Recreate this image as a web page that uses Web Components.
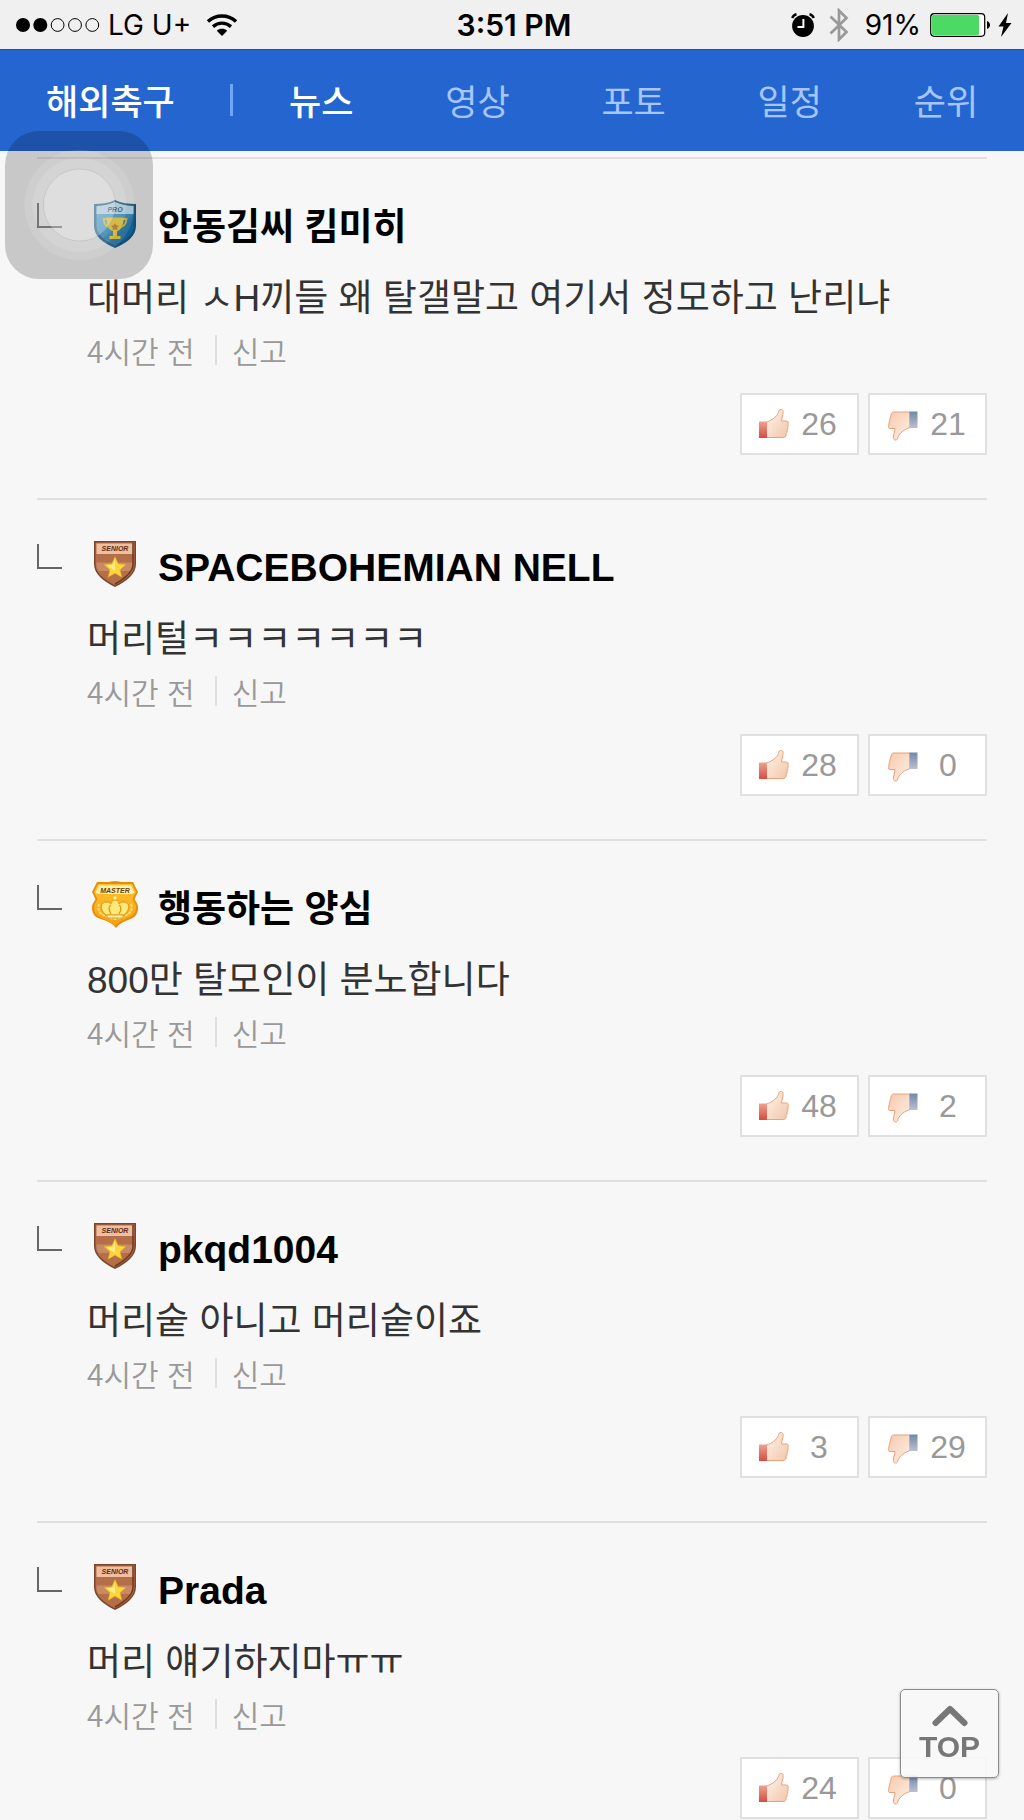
<!DOCTYPE html>
<html lang="ko">
<head>
<meta charset="utf-8">
<meta name="viewport" content="width=device-width, initial-scale=1">
<title>해외축구 뉴스</title>
<style>
  body {
    margin: 0;
    background: #f7f7f7;
    font-family: 'Liberation Sans', 'Noto Sans CJK KR', sans-serif;
    color: #333;
  }
</style>
</head>
<body>
<status-bar carrier="LG U+" time="3:51 PM" battery="91"></status-bar>
<sports-nav heading="해외축구">
  <a href="#news" class="on">뉴스</a>
  <a href="#video">영상</a>
  <a href="#photo">포토</a>
  <a href="#schedule">일정</a>
  <a href="#rank">순위</a>
</sports-nav>
<main>
  <reply-list>
    <reply-item grade="pro" name="안동김씨 킴미히" up="26" down="21">대머리 ㅅH끼들 왜 탈갤말고 여기서 정모하고 난리냐</reply-item>
    <reply-item grade="senior" name="SPACEBOHEMIAN NELL" up="28" down="0">머리털ㅋㅋㅋㅋㅋㅋㅋ</reply-item>
    <reply-item grade="master" name="행동하는 양심" up="48" down="2">800만 탈모인이 분노합니다</reply-item>
    <reply-item grade="senior" name="pkqd1004" up="3" down="29">머리숱 아니고 머리숱이죠</reply-item>
    <reply-item grade="senior" name="Prada" up="24" down="0">머리 얘기하지마ㅠㅠ</reply-item>
  </reply-list>
</main>
<assistive-touch></assistive-touch>
<top-button></top-button>

<script>
class StatusBar extends HTMLElement {
  constructor() {
    super()
    this.attachShadow({ mode: 'open' })
  }

  connectedCallback() {
    this.shadowRoot.innerHTML = `
      <style>
        :host {
          display: grid;
          grid-template-columns: 1fr auto 1fr;
          align-items: center;
          height: 49px;
          padding: 0 12px 0 16px;
          background: #f0f0f0;
          color: #000;
          font: 28px/50px Inter, sans-serif;
        }
        .left, .right { display: flex; align-items: center; }
        .left { gap: 8px; }
        .right { justify-content: flex-end; }
        .time { font-size: 30px; font-weight: 600; }
        .wifi { margin-left: 8px; }
        .bt { margin: 0 16px 0 14px; }
        .battery { margin: 0 8px 0 9px; }
        svg { display: block; flex: none; }
      </style>
      <div class="left">
        <svg width="84" height="14" viewBox="0 0 84 14">
          <circle cx="7" cy="7" r="7"/>
          <circle cx="24.3" cy="7" r="7"/>
          <g fill="none" stroke="#000">
            <circle cx="41.6" cy="7" r="6.4"/>
            <circle cx="59" cy="7" r="6.4"/>
            <circle cx="76.3" cy="7" r="6.4"/>
          </g>
        </svg>
        <span>${this.getAttribute('carrier')}</span>
        <svg class="wifi" width="30" height="22" viewBox="0 0 30 22">
          <g fill="none" stroke="#000" stroke-width="3.4">
            <path d="M1 7.5C9 .1 21 .1 29 7.5"/>
            <path d="M6 12.6c5.300-4.600 12.700-4.600 18 0"/>
          </g>
          <path d="M15 22l-5.200-5.300c3-2.500 7.400-2.500 10.400 0z"/>
        </svg>
      </div>
      <span class="time">${this.getAttribute('time')}</span>
      <div class="right">
        <svg width="24" height="24" viewBox="0 0 24 24">
          <circle cx="12" cy="13" r="10.900"/>
          <path d="M1.200 5C2 3 3.600 1.500 5.500 1.200M22.800 5C22 3 20.400 1.500 18.500 1.200" fill="none" stroke="#000" stroke-width="2.400"/>
          <path d="M12.400 6v8H6.500" fill="none" stroke="#fff" stroke-width="2"/>
        </svg>
        <svg class="bt" width="20" height="34" viewBox="0 0 20 34">
          <path d="M1.500 8.500L17.500 24 10 31.500V2.500l7.500 7.500L1.500 25.500" fill="none" stroke="#999" stroke-width="2.700"/>
        </svg>
        <span>${this.getAttribute('battery')}%</span>
        <svg class="battery" width="60" height="24" viewBox="0 0 60 24">
          <rect x=".7" y=".7" width="54" height="22.600" rx="3.500" fill="#fff" stroke="#000" stroke-width="1.200"/>
          <rect x="2" y="2" width="47" height="20" rx="1.500" fill="#4cd964"/>
          <path d="M57 8c4 1.500 4 6.500 0 8z"/>
        </svg>
        <svg width="14" height="24" viewBox="0 0 14 24">
          <path d="M10 0L.5 13.500h5L3 24l10.500-14H8z"/>
        </svg>
      </div>
    `
  }
}
customElements.define('status-bar', StatusBar)

class SportsNav extends HTMLElement {
  constructor() {
    super()
    this.attachShadow({ mode: 'open' })
  }

  connectedCallback() {
    this.shadowRoot.innerHTML = `
      <style>
        :host {
          display: block;
          background: #2565d0;
          border-top: 1px solid #1e51a5;
          font: 35px/50px 'Noto Sans CJK KR', sans-serif;
        }
        nav {
          display: grid;
          grid-template-columns: 23fr 3px 79fr;
          align-items: center;
          height: 99px;
          padding-bottom: 2px;
        }
        .title {
          padding-left: 46px;
          color: #fff;
          text-decoration: none;
        }
        .bar { height: 32px; background: #6ea6fb; }
        .menu { display: grid; grid-template-columns: repeat(5, 1fr); padding-left: 10px; }
        ::slotted(a) { color: #a5c6ff; text-align: center; text-decoration: none; }
        .title, ::slotted(a.on) { color: #fff; font-weight: 500; }
      </style>
      <nav>
        <a class="title" href="#">${this.getAttribute('heading')}</a>
        <span class="bar"></span>
        <div class="menu"><slot></slot></div>
      </nav>
    `
  }
}
customElements.define('sports-nav', SportsNav)

class ReplyList extends HTMLElement {
  constructor() {
    super()
    this.attachShadow({ mode: 'open' })
    this.shadowRoot.innerHTML = `
      <style>
        :host { display: block; padding: 6px 37px 0; }
        ::slotted(reply-item:last-child) { padding-bottom: 0; }
      </style>
      <slot></slot>
    `
  }
}
customElements.define('reply-list', ReplyList)

const grades = {
  pro: `
    <linearGradient id="g" x1="0" x2="1" y2="1"><stop offset="0" stop-color="#48b6ec"/><stop offset="1" stop-color="#1675b5"/></linearGradient>
    <path d="M21 0c6 3 14 4 21 4v22c0 10-9 17-21 22C9 43 0 36 0 26V4c7 0 15-1 21-4z" fill="#155f90"/>
    <path d="M21 2c6 3 12 3.800 18.500 4v20c0 8-8 14.500-18.500 19.500C10.500 40.500 2.500 34 2.500 26V6C9 5.800 15 5 21 2z" fill="url(#g)"/>
    <path d="M2.500 6C9 5.800 15 5 21 2c6 3 12 3.800 18.500 4v8h-37z" fill="#c2e8fa"/>
    <path d="M39.500 15v11c0 8-8 14.500-18.500 19.500-5-2.500-9-5-12-8z" fill="#0c5e9e" opacity=".35"/>
    <path d="M14 19H9.500c.5 5 3 8 7 8M28 19h4.500c-.5 5-3 8-7 8" fill="none" stroke="#f3c81b" stroke-width="1.800"/>
    <path d="M12.500 17.500h17c0 8-2 12.500-6.500 13.500v5h3.500v3h-11v-3H19v-5c-4.500-1-6.500-5.500-6.500-13.500z" fill="#f8d11f"/>
    <path d="M21 23l1.300 2.200 2.700.5-1.800 2 .2 2.500-2.400-1-2.400 1 .2-2.500-1.800-2 2.700-.5z" fill="#c2781b"/>
    <text x="21" y="11.500" fill="#174f74">PRO</text>`,
  senior: `
    <path d="M0 0h42v23c0 10-9 17-21 23C9 40 0 33 0 23z" fill="#7b452b"/>
    <path d="M1.500 1.500h39V23c0 9-8 15.500-19.500 21.200C9.500 38.500 1.500 32 1.500 23z" fill="#b46f48"/>
    <path d="M2.500 21.500h37c0 3-.5 6-2 8.500h-33c-1.500-2.500-2-5.500-2-8.500z" fill="#c88a65"/>
    <path d="M2.500 2.500h37V13h-37z" fill="#efbfa0"/>
    <path d="M39 2v21c0 8-7 14-18 20" fill="none" stroke="#6b3a22" stroke-width="1.500"/>
    <path d="M21 15.500l3.200 7.200 7.800.8-5.900 5.200 1.800 7.600-6.900-4-6.900 4 1.800-7.600-5.900-5.200 7.800-.8z" fill="#fcd53c" stroke="#e3a520" stroke-width=".5"/>
    <path d="M21 18v12l-8-5.500 6-.8z" fill="#ffef83"/>
    <text x="21" y="10" fill="#5b2c17">SENIOR</text>`,
  master: `
    <linearGradient id="g" x2="0" y2="1"><stop offset="0" stop-color="#ffc330"/><stop offset="1" stop-color="#f4a010"/></linearGradient>
    <path d="M3 0h11l7-1 7 1h11l5 10-3.500 7c1 3 3.500 4 3.500 9 0 7-4 10-10 12-5 2-9 4-12 8-3-4-7-6-12-8C2 36-2 33-2 26c0-5 2.500-6 3.500-9L-2 10z" fill="#e38e0c"/>
    <path d="M4 2h34l4 8-3.500 7c1 3 3.500 4 3.500 9 0 6-4 8.500-9 10.500-5 2-9 4-12 7.500-2.500-3.500-7-5.500-12-7.500-5-2-9-4.500-9-10.500 0-5 2.500-6 3.500-9L0 10z" fill="url(#g)"/>
    <path d="M5 3.500h32l3.500 7L38 12H4l-2.500-1.500z" fill="#fff0ac"/>
    <path d="M5 22c-3 8 4 13 16 15 12-2 19-7 16-15" fill="none" stroke="#ffdf70" stroke-width="2" stroke-dasharray="3 1"/>
    <path d="M12 33c-7-6-6-13 1-13 2 0 3 1 4 2 0-2 1-4 4-4s4 2 4 4c1-1 2-2 4-2 7 0 8 7 1 13z" fill="#ffe778" stroke="#d88d10" stroke-width=".8"/>
    <path d="M17 32c-3-5-2-8 0-9M25 32c3-5 2-8 0-9" fill="none" stroke="#dc9a18" stroke-width="1.300"/>
    <path d="M13 33h16v3H13z" fill="#ffef98" stroke="#c87c10" stroke-width=".6"/>
    <circle cx="21" cy="16" r="1.700" fill="#fff2a0"/>
    <text x="21" y="10.500" fill="#6d3c08">MASTER</text>`
}

class GradeBadge extends HTMLElement {
  constructor() {
    super()
    this.attachShadow({ mode: 'open' })
  }

  connectedCallback() {
    this.shadowRoot.innerHTML = `
      <style>
        :host { display: block; width: 46px; height: 50px; }
        svg { display: block; }
        text { font: italic 900 7px 'Liberation Sans', sans-serif; text-anchor: middle; }
      </style>
      <svg width="46" height="50" viewBox="-2 -1 46 50">${grades[this.getAttribute('grade')]}</svg>
    `
  }
}
customElements.define('grade-badge', GradeBadge)

class VoteButton extends HTMLElement {
  constructor() {
    super()
    this.attachShadow({ mode: 'open' })
  }

  connectedCallback() {
    const up = this.getAttribute('kind') === 'up'
    const icon = up
      ? `<linearGradient id="cuff" x2="0" y2="1"><stop offset="0" stop-color="#eda28f"/><stop offset="1" stop-color="#d54c40"/></linearGradient>
         <path d="M7.500 13c5-1.500 10-5 12-9.500.5-2 .7-3 2.500-3 2.500 0 2.500 3 1.500 6.500-.5 2-1 3.500-1 5h5c2 0 2 2 1.300 3.200.7.900.5 2.300-.2 3 .4 1 .1 2.200-.6 3 .4 1.300 0 2.300-.8 3 .2 2.500-.7 4.300-3 4.300H7.500z" fill="url(#skin)" stroke="#e5a27b"/>
         <path d="M0 12.500h8v16.500H0z" fill="url(#cuff)"/>`
      : `<linearGradient id="cuff" x2="0" y2="1"><stop offset="0" stop-color="#7188a6"/><stop offset="1" stop-color="#bdbfd0"/></linearGradient>
         <path d="M22 16.500c-5 1.500-10 5-12 9.500-.5 2-.7 3-2.500 3-2.500 0-2.500-3-1.500-6.500.5-2 1-3.500 1-5H2c-2 0-2-2-1.300-3.200.2-1.800.5-3 .9-4.500.2-1.500.6-2.500 1-4C3 3.500 3.500 1 5.500 1H22z" fill="url(#skin)" stroke="#e5a27b"/>
         <path d="M21.500.5h8V17h-8z" fill="url(#cuff)"/>`
    this.shadowRoot.innerHTML = `
      <style>
        :host { display: block; }
        button {
          display: flex;
          align-items: center;
          gap: 12px;
          height: 62px;
          padding: 0 20px 0 17px;
          border: 2px solid #e0e0e0;
          background: #fff;
          color: #999;
          font: 32px/36px 'Liberation Sans', sans-serif;
        }
        :host([kind=down]) button { padding: 0 19px 0 18px; }
        svg { display: block; }
        :host([kind=down]) svg { margin-top: 4px; }
        span { min-width: 36px; text-align: center; }
      </style>
      <button type="button" aria-label="${up ? '공감' : '비공감'}">
        <svg width="30" height="30" viewBox="0 0 30 30">
          <linearGradient id="skin" x2="1" y2="1"><stop offset="0" stop-color="${up ? '#fff4ea' : '#f6c9ae'}"/><stop offset="1" stop-color="${up ? '#f2c5aa' : '#fff0e5'}"/></linearGradient>
          ${icon}
        </svg>
        <span><slot></slot></span>
      </button>
    `
  }
}
customElements.define('vote-button', VoteButton)

class ReplyItem extends HTMLElement {
  constructor() {
    super()
    this.attachShadow({ mode: 'open' })
  }

  connectedCallback() {
    const name = this.getAttribute('name')
    const latin = /^[\x20-\x7e]+$/.test(name)
    this.shadowRoot.innerHTML = `
      <style>
        :host {
          display: block;
          padding: 38px 0 43px;
          border-top: 2px solid #e0e0e0;
        }
        .head { display: flex; height: 56px; }
        .corner {
          width: 23px;
          height: 23px;
          margin: 6px 30px 0 0;
          border: solid #666;
          border-width: 0 0 2px 2px;
        }
        grade-badge { margin-top: 2px; }
        .name {
          margin: 0 0 0 20px;
          color: #000;
          font: bold 37px/54px 'Noto Sans CJK KR', sans-serif;
        }
        .name.latin { font-family: 'Liberation Sans', sans-serif; font-size: 39px; line-height: 60px; }
        .text {
          margin: 22px 0 9px 50px;
          font-size: 37px;
          line-height: 48px;
        }
        .meta {
          display: flex;
          align-items: center;
          height: 36px;
          margin: 0 0 25px 50px;
          color: #999;
          font: 350 30px/36px 'Noto Sans CJK KR', sans-serif;
        }
        .meta a {
          color: inherit;
          text-decoration: none;
        }
        .line { width: 2px; height: 30px; margin: 0 15px 0 20px; background: #e0e0e0; }
        .votes { display: flex; justify-content: flex-end; gap: 9px; }
      </style>
      <div class="head">
        <span class="corner"></span>
        <grade-badge grade="${this.getAttribute('grade')}"></grade-badge>
        <h3 class="name ${latin ? 'latin' : ''}">${name}</h3>
      </div>
      <p class="text"><slot></slot></p>
      <div class="meta">
        <span>4시간 전</span>
        <span class="line"></span>
        <a href="#report">신고</a>
      </div>
      <div class="votes">
        <vote-button kind="up">${this.getAttribute('up')}</vote-button>
        <vote-button kind="down">${this.getAttribute('down')}</vote-button>
      </div>
    `
  }
}
customElements.define('reply-item', ReplyItem)

class AssistiveTouch extends HTMLElement {
  constructor() {
    super()
    this.attachShadow({ mode: 'open' })
    this.shadowRoot.innerHTML = `
      <style>
        :host { position: fixed; left: 5px; top: 131px; }
        button {
          display: block;
          width: 148px;
          height: 148px;
          padding: 0;
          border: 0;
          border-radius: 34px;
          background: rgba(0, 0, 0, .19);
        }
        svg { display: block; }
      </style>
      <button type="button" aria-label="AssistiveTouch">
        <svg width="148" height="148" viewBox="0 0 148 148">
          <g fill="#fff">
            <circle cx="74.500" cy="74" r="55" opacity=".1"/>
            <circle cx="74.500" cy="74" r="47" opacity=".11"/>
            <circle cx="74.500" cy="74" r="36" opacity=".26"/>
          </g>
          <circle cx="74.500" cy="74" r="36" fill="none" stroke="#000" opacity=".08"/>
        </svg>
      </button>
    `
  }
}
customElements.define('assistive-touch', AssistiveTouch)

class TopButton extends HTMLElement {
  constructor() {
    super()
    this.attachShadow({ mode: 'open' })
    this.shadowRoot.innerHTML = `
      <style>
        :host { position: fixed; right: 25px; bottom: 42px; }
        button {
          display: flex;
          flex-direction: column;
          align-items: center;
          width: 99px;
          height: 89px;
          padding: 15px 0 0;
          border: 1px solid #8b8b8b;
          border-radius: 5px;
          background: rgba(248, 248, 248, .88);
          box-shadow: 0 1px 3px rgba(0, 0, 0, .3);
          color: #777;
          font: bold 30px/32px 'Liberation Sans', sans-serif;
        }
        svg { display: block; margin-bottom: 4px; }
      </style>
      <button type="button">
        <svg width="36" height="22" viewBox="0 0 36 22">
          <path d="M3.500 18L18 4l14.500 14" fill="none" stroke="#777" stroke-width="6" stroke-linecap="round" stroke-linejoin="round"/>
        </svg>
        <span>TOP</span>
      </button>
    `
    this.shadowRoot.querySelector('button').addEventListener('click', () => {
      window.scrollTo(0, 0)
    })
  }
}
customElements.define('top-button', TopButton)
</script>
</body>
</html>
